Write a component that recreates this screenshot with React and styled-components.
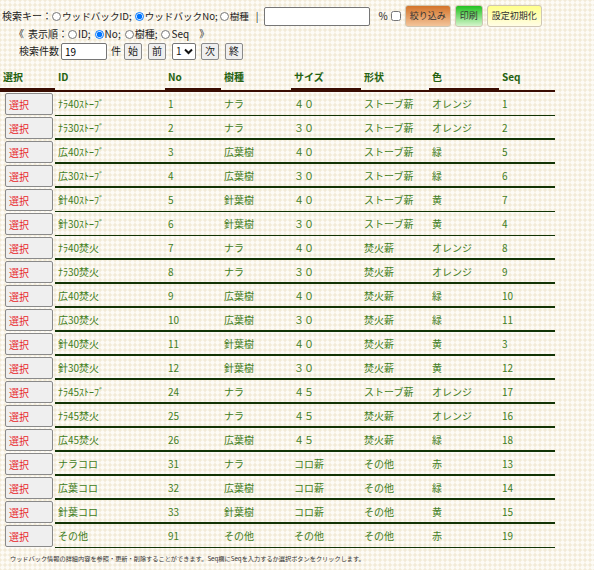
import styled, { createGlobalStyle } from "styled-components";

const GlobalStyle = createGlobalStyle`
  html, body {
    margin: 0;
    padding: 0;
  }
  body {
    min-height: 570px;
    font-family: "Noto Sans CJK JP", "Noto Sans", sans-serif;
    font-size: 10px;
    color: #222;
    background-color: #f2ead7;
    background-image: radial-gradient(circle, #fdfbf6 1.9px, transparent 2.4px);
    background-size: 5px 5px;
  }
`;

const Page = styled.div`
  padding: 0 0 0 2px;
`;

const Line = styled.div`
  display: flex;
  align-items: center;
  height: ${({ $h }) => $h}px;
  padding-left: ${({ $indent }) => $indent || 0}px;
  margin-top: ${({ $top }) => $top || 0}px;
  line-height: 12px;
  white-space: nowrap;
`;

const Label = styled.label`
  display: inline-flex;
  align-items: center;
  font-size: ${({ $fs }) => $fs || 10}px;
  margin-right: ${({ $gap }) => ($gap === undefined ? 4 : $gap)}px;
`;

const Radio = styled.input.attrs({ type: "radio" })`
  width: 9px;
  height: 9px;
  margin: 0 1px 0 0;
`;

const Check = styled.input.attrs({ type: "checkbox" })`
  width: 10px;
  height: 10px;
  margin: 0 4px 0 3px;
`;

const TextBox = styled.input`
  width: ${({ $w }) => $w}px;
  height: ${({ $h }) => $h}px;
  box-sizing: border-box;
  border: 1px solid #767676;
  border-radius: 2px;
  background: #fff;
  font: inherit;
  font-size: 10px;
  padding: 0 3px;
  margin: ${({ $m }) => $m || "0"};
`;

const Spacer = styled.span`
  display: inline-block;
  width: ${({ $w }) => $w}px;
`;

const ActionButton = styled.button`
  height: 22px;
  box-sizing: border-box;
  margin-left: ${({ $ml }) => $ml}px;
  padding: 0 4px;
  border: 1px solid #cfc7b4;
  border-radius: 3px;
  font: inherit;
  font-size: 9px;
  color: #333;
  background: ${({ $tone }) =>
    $tone === "orange"
      ? "linear-gradient(#d4742a, #f3c49a)"
      : $tone === "green"
      ? "linear-gradient(#23c21f, #d4f5cc)"
      : "linear-gradient(#ffff8a, #fffde6)"};
`;

const SmallButton = styled.button`
  height: 17px;
  box-sizing: border-box;
  margin-left: ${({ $ml }) => $ml}px;
  padding: 0 3px;
  border: 1px solid #8a8a8a;
  border-radius: 2px;
  background: #efefef;
  font: inherit;
  font-size: 10px;
  color: #222;
`;

const SelectWrap = styled.span`
  position: relative;
  display: inline-block;
  margin-left: 6px;
  height: 17px;
`;

const PageSelect = styled.select`
  appearance: none;
  height: 17px;
  width: 24px;
  box-sizing: border-box;
  padding: 0 0 0 3px;
  border: 1px solid #767676;
  border-radius: 2px;
  background: #fff;
  font: inherit;
  font-size: 10px;
  color: #111;
`;

const Chevron = styled.svg`
  position: absolute;
  right: 3px;
  top: 5px;
  pointer-events: none;
`;

const Table = styled.table`
  border-collapse: collapse;
  margin: 4px 0 0 -2px;
  width: 555px;
  table-layout: fixed;
`;

const Th = styled.th`
  text-align: left;
  font-weight: bold;
  color: #246210;
  padding: 7px 3px 9px;
  line-height: 12px;
  height: 12px;
  background-image: linear-gradient(
    to top,
    #3a0d02 ${({ $thick }) => ($thick ? 4 : 2)}px,
    transparent 0
  );
`;

const Td = styled.td`
  height: 24px;
  padding: 0 3px;
  line-height: 12px;
  color: #3f7d22;
  vertical-align: middle;
  background-image: linear-gradient(to top, #123405 1.5px, transparent 0);
  white-space: nowrap;
`;

const SelectCell = styled.td`
  height: 24px;
  padding: 0 0 0 5px;
  vertical-align: middle;
`;

const PickButton = styled.button`
  display: block;
  width: 48px;
  height: 22px;
  box-sizing: border-box;
  padding: 0 0 0 3px;
  text-align: left;
  border: 1px solid #8a8a8a;
  border-radius: 2px;
  background: #efefef;
  color: #e8262a;
  font: inherit;
  font-size: 10px;
`;

const Footer = styled.p`
  margin: 6px 0 0 8px;
  font-size: 6.2px;
  color: #333;
  white-space: nowrap;
`;

const columns = [
  { key: "pick", label: "選択", width: 55, thick: true },
  { key: "id", label: "ID", width: 110 },
  { key: "no", label: "No", width: 56, thick: true },
  { key: "tree", label: "樹種", width: 70 },
  { key: "size", label: "サイズ", width: 70, thick: true },
  { key: "shape", label: "形状", width: 68 },
  { key: "color", label: "色", width: 70, thick: true },
  { key: "seq", label: "Seq", width: 56 },
];

const rows = [
  ["ﾅﾗ40ｽﾄｰﾌﾞ", 1, "ナラ", "４０", "ストーブ薪", "オレンジ", 1],
  ["ﾅﾗ30ｽﾄｰﾌﾞ", 2, "ナラ", "３０", "ストーブ薪", "オレンジ", 2],
  ["広40ｽﾄｰﾌﾞ", 3, "広葉樹", "４０", "ストーブ薪", "緑", 5],
  ["広30ｽﾄｰﾌﾞ", 4, "広葉樹", "３０", "ストーブ薪", "緑", 6],
  ["針40ｽﾄｰﾌﾞ", 5, "針葉樹", "４０", "ストーブ薪", "黄", 7],
  ["針30ｽﾄｰﾌﾞ", 6, "針葉樹", "３０", "ストーブ薪", "黄", 4],
  ["ﾅﾗ40焚火", 7, "ナラ", "４０", "焚火薪", "オレンジ", 8],
  ["ﾅﾗ30焚火", 8, "ナラ", "３０", "焚火薪", "オレンジ", 9],
  ["広40焚火", 9, "広葉樹", "４０", "焚火薪", "緑", 10],
  ["広30焚火", 10, "広葉樹", "３０", "焚火薪", "緑", 11],
  ["針40焚火", 11, "針葉樹", "４０", "焚火薪", "黄", 3],
  ["針30焚火", 12, "針葉樹", "３０", "焚火薪", "黄", 12],
  ["ﾅﾗ45ｽﾄｰﾌﾞ", 24, "ナラ", "４５", "ストーブ薪", "オレンジ", 17],
  ["ﾅﾗ45焚火", 25, "ナラ", "４５", "焚火薪", "オレンジ", 16],
  ["広45焚火", 26, "広葉樹", "４５", "焚火薪", "緑", 18],
  ["ナラコロ", 31, "ナラ", "コロ薪", "その他", "赤", 13],
  ["広葉コロ", 32, "広葉樹", "コロ薪", "その他", "緑", 14],
  ["針葉コロ", 33, "針葉樹", "コロ薪", "その他", "黄", 15],
  ["その他", 91, "その他", "その他", "その他", "赤", 19],
];

export default function App() {
  return (
    <Page>
      <GlobalStyle />
      <Line $h={22} $top={5}>
        <span>検索キー：</span>
        <Label $fs={9.6} $gap={3}>
          <Radio name="key" />
          ウッドバックID;
        </Label>
        <Label $fs={9.6} $gap={2}>
          <Radio name="key" defaultChecked />
          ウッドバックNo;
        </Label>
        <Label $fs={9.6} $gap={0}>
          <Radio name="key" />
          樹種
        </Label>
        <Spacer $w={7} />
        <span>|</span>
        <TextBox $w={106} $h={19} $m="0 0 0 5px" />
        <Spacer $w={9} />
        <span>%</span>
        <Check />
        <ActionButton $ml={0} $tone="orange">
          絞り込み
        </ActionButton>
        <ActionButton $ml={4} $tone="green">
          印刷
        </ActionButton>
        <ActionButton $ml={4} $tone="yellow">
          設定初期化
        </ActionButton>
      </Line>
      <Line $h={14} $indent={12}>
        <span>《</span>
        <Spacer $w={4} />
        <span>表示順：</span>
        <Label>
          <Radio name="order" />
          ID;
        </Label>
        <Label>
          <Radio name="order" defaultChecked />
          No;
        </Label>
        <Label>
          <Radio name="order" />
          樹種;
        </Label>
        <Label>
          <Radio name="order" />
          Seq
        </Label>
        <Spacer $w={6} />
        <span>》</span>
      </Line>
      <Line $h={18} $indent={17} $top={1}>
        <span>検索件数</span>
        <TextBox $w={46} $h={17} $m="0 0 0 2px" defaultValue="19" />
        <Spacer $w={4} />
        <span>件</span>
        <SmallButton $ml={3}>始</SmallButton>
        <SmallButton $ml={6}>前</SmallButton>
        <SelectWrap>
          <PageSelect defaultValue="1">
            <option value="1">1</option>
          </PageSelect>
          <Chevron width="9" height="7" viewBox="0 0 9 7">
            <path
              d="M1 1.5 L4.5 5 L8 1.5"
              fill="none"
              stroke="#111"
              strokeWidth="2"
            />
          </Chevron>
        </SelectWrap>
        <SmallButton $ml={5}>次</SmallButton>
        <SmallButton $ml={6}>終</SmallButton>
      </Line>
      <Table>
        <colgroup>
          {columns.map((c) => (
            <col key={c.key} style={{ width: c.width }} />
          ))}
        </colgroup>
        <thead>
          <tr>
            {columns.map((c) => (
              <Th key={c.key} $thick={c.thick}>
                {c.label}
              </Th>
            ))}
          </tr>
        </thead>
        <tbody>
          {rows.map((r) => (
            <tr key={r[1]}>
              <SelectCell>
                <PickButton>選択</PickButton>
              </SelectCell>
              {r.map((v, i) => (
                <Td key={i}>{v}</Td>
              ))}
            </tr>
          ))}
        </tbody>
      </Table>
      <Footer>
        ウッドバック情報の詳細内容を参照・更新・削除することができます。Seq欄にSeqを入力するか選択ボタンをクリックします。
      </Footer>
    </Page>
  );
}
